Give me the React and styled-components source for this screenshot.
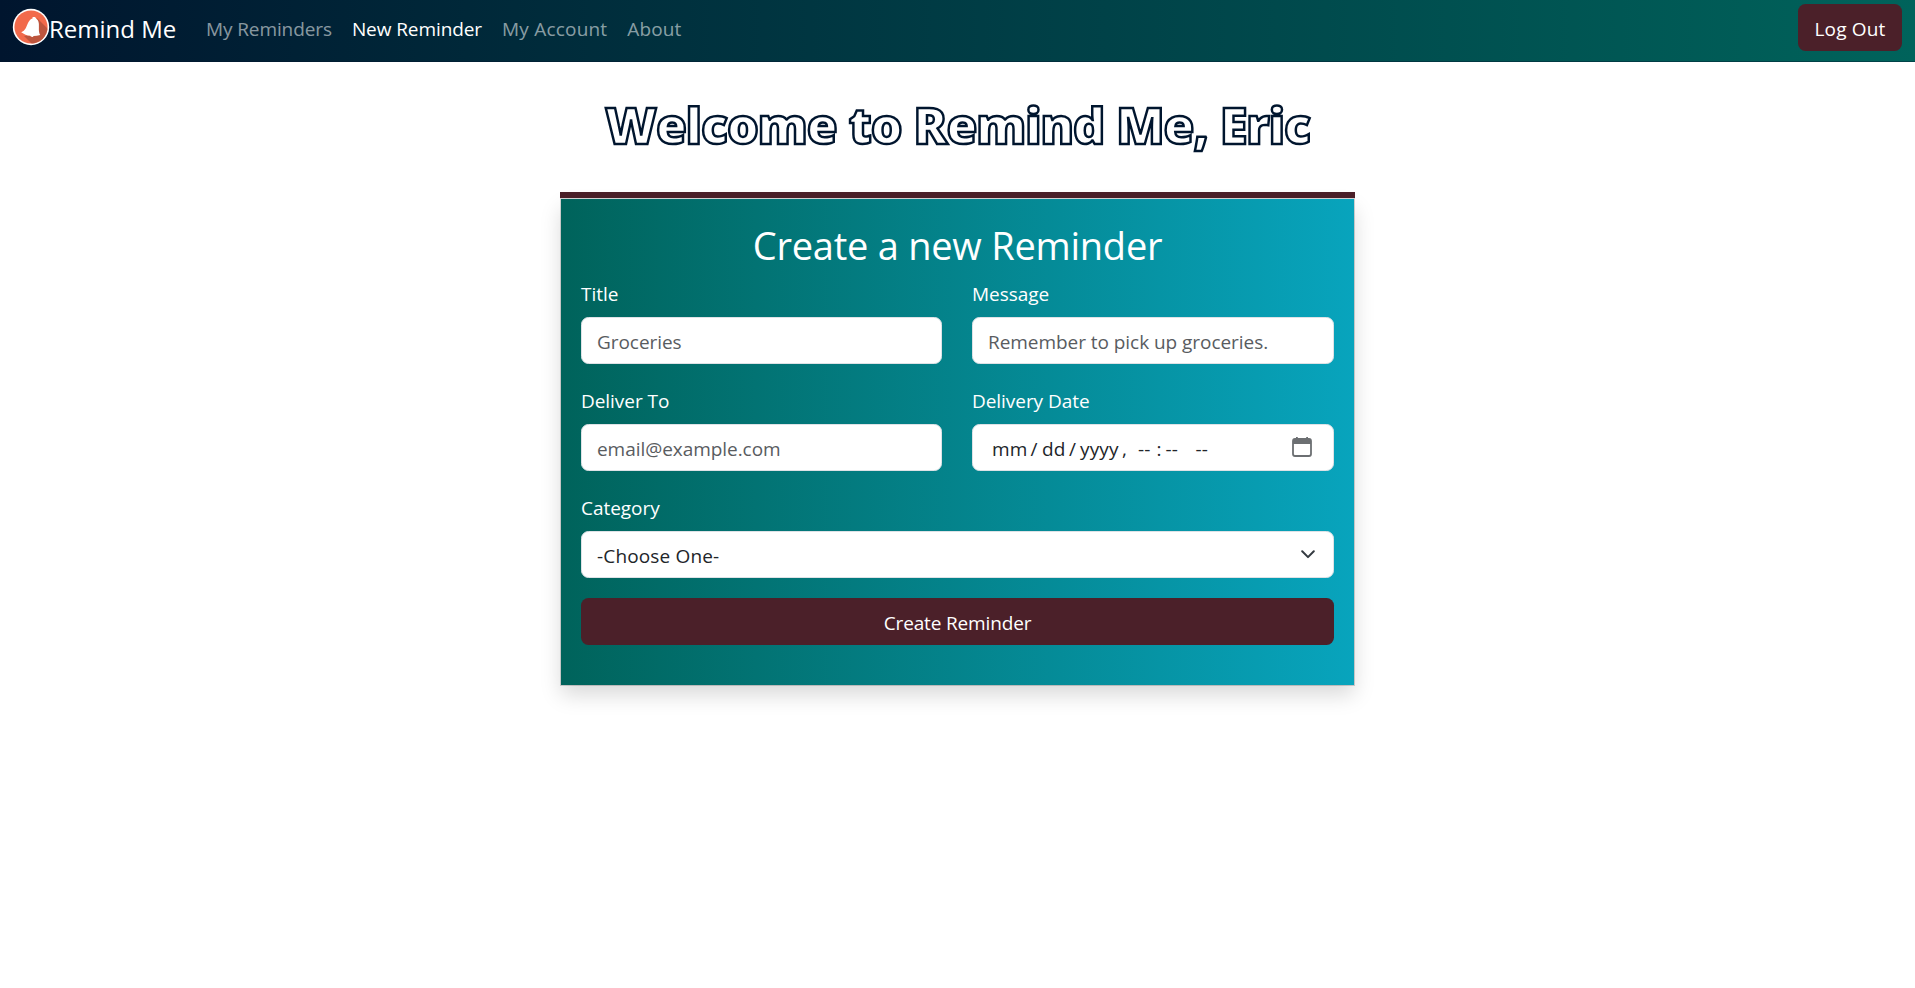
import React from 'react';
import styled, { createGlobalStyle } from 'styled-components';

const maroon = '#4b2029';

const GlobalStyle = createGlobalStyle`
  *, *::before, *::after { box-sizing: border-box; }
  body {
    margin: 0;
    background: #fff;
    color: #212529;
    font: 19px/30px "Open Sans", "Noto Sans", sans-serif;
  }
`;

const Page = styled.div`
  min-height: 100vh;
`;

const Navbar = styled.nav`
  display: flex;
  align-items: flex-start;
  height: 62px;
  padding: 4px 13px 0 12px;
  background: linear-gradient(to right, #00152e, #00635b);
  box-shadow: inset 0 -1px rgba(0, 21, 46, 0.4);
`;

const Brand = styled.a`
  display: flex;
  align-items: flex-start;
  width: 194px;
  padding-top: 4px;
  color: #fff;
  font-size: 24px;
  line-height: 38px;
  white-space: nowrap;
`;

const BellLogo = styled.svg`
  width: 38px;
  height: 38px;
  margin: 0 -1px 0 0;
  flex: none;
`;

const BrandName = styled.span`
  margin-top: 2px;
`;

const NavLinks = styled.div`
  display: flex;
  flex: 1;
  gap: 20px;
  padding-top: 10px;
`;

const NavLink = styled.a`
  color: ${({ $active }) => ($active ? '#fff' : 'rgba(255, 255, 255, 0.55)')};
  letter-spacing: ${({ $tracking }) => $tracking}px;
`;

const Button = styled.button`
  height: 47px;
  width: ${({ $block }) => ($block ? '100%' : '104px')};
  padding: 2px 0 0;
  border: 0;
  border-radius: 7.5px;
  background: ${maroon};
  color: #fff;
  font: inherit;
  letter-spacing: ${({ $block }) => ($block ? '-0.15px' : '0.2px')};
`;

const Main = styled.main`
  display: flex;
  flex-direction: column;
  align-items: center;
`;

const Welcome = styled.h1`
  margin: 33px 0 37px;
  color: #fff;
  font-size: 50px;
  font-weight: 800;
  line-height: 60px;
  letter-spacing: -1px;
  -webkit-text-stroke: 2.5px #00152e;
`;

const AccentBar = styled.div`
  width: 795px;
  height: 6px;
  background: ${maroon};
`;

const Card = styled.section`
  width: 793px;
  height: 486px;
  margin-top: 1px;
  padding: 20px;
  background: linear-gradient(to right, #00635b, #08a4bd);
  box-shadow: 0 0 0 1px rgba(0, 0, 0, 0.17), 0 10px 20px rgba(0, 0, 0, 0.15);
  color: #fff;
`;

const CardTitle = styled.h2`
  margin: 2px 0 10px;
  font-size: 38px;
  font-weight: 400;
  line-height: 48px;
  letter-spacing: -0.24px;
  text-align: center;
`;

const Fields = styled.div`
  display: grid;
  grid-template-columns: 361px 362px;
  column-gap: 30px;
  row-gap: 22px;
  margin-bottom: 20px;
`;

const Field = styled.div`
  grid-column: ${({ $wide }) => ($wide ? '1 / -1' : 'auto')};
`;

const Label = styled.div`
  height: 38px;
  letter-spacing: -0.05px;
`;

const Control = styled.div`
  display: flex;
  align-items: center;
  justify-content: space-between;
  height: 47px;
  padding: 2px 16px 0 15px;
  border: 1px solid #dee2e6;
  border-radius: 7.5px;
  background: #fff;
  color: ${({ $placeholder }) => ($placeholder ? '#595c5f' : '#212529')};
  letter-spacing: ${({ $placeholder }) => ($placeholder ? '-0.05px' : '0.15px')};
`;

const DateParts = styled.div`
  display: flex;
  padding-left: 4px;
`;

const DatePart = styled.span`
  width: ${({ $w }) => $w}px;
  white-space: pre;
`;

const CalendarIcon = styled.svg`
  width: 20px;
  height: 20px;
  margin: -4px 5px 0 0;
`;

const Chevron = styled.svg`
  width: 14px;
  height: 9px;
  margin: -3px 2px 0 0;
`;

const links = [
  { label: 'My Reminders', tracking: -0.1 },
  { label: 'New Reminder', tracking: -0.08, active: true },
  { label: 'My Account', tracking: 0.2 },
  { label: 'About', tracking: 0.1 },
];

const dateParts = [
  ['mm', 38.5], ['/', 11.5], ['dd', 27], ['/', 11], ['yyyy', 42], [',', 16],
  ['--', 18.5], [':', 9], ['--', 30], ['--', 16],
];

function Bell() {
  return (
    <BellLogo viewBox="0 0 38 38">
      <defs>
        <clipPath id="disc"><circle cx="19" cy="19" r="16.6" /></clipPath>
      </defs>
      <circle cx="19" cy="19" r="18.2" fill="#fff" />
      <g clipPath="url(#disc)">
        <rect width="38" height="38" fill="#f26a4b" />
        <path d="M25 10 L38 23 V38 H22 L12 28 L27 26 Z" fill="#bd553d" />
      </g>
      <path d="M20.5 9.2 C22.2 8.5 23.9 9 24.2 10.8 C27 12.6 27.1 15.8 26.9 19.5 C26.7 23 27.2 25.4 28.2 27.1 C26 27.6 23.8 28 21.6 28 C21.2 29.3 18.9 29.1 18.2 27.8 C15 27.4 12 26.2 9.2 24.2 C11.2 23.4 12.6 22.3 13.7 20.3 C15.5 17 16.5 11.6 20.5 10.5 Z" fill="#fff" />
    </BellLogo>
  );
}

export default function App() {
  return (
    <Page>
      <GlobalStyle />
      <Navbar>
        <Brand><Bell /><BrandName>Remind Me</BrandName></Brand>
        <NavLinks>
          {links.map((l) => (
            <NavLink key={l.label} $active={l.active} $tracking={l.tracking}>{l.label}</NavLink>
          ))}
        </NavLinks>
        <Button>Log Out</Button>
      </Navbar>
      <Main>
        <Welcome>Welcome to Remind Me, Eric</Welcome>
        <AccentBar />
        <Card>
          <CardTitle>Create a new Reminder</CardTitle>
          <Fields>
            <Field><Label>Title</Label><Control $placeholder>Groceries</Control></Field>
            <Field><Label>Message</Label><Control $placeholder>Remember to pick up groceries.</Control></Field>
            <Field><Label>Deliver To</Label><Control $placeholder>email@example.com</Control></Field>
            <Field>
              <Label>Delivery Date</Label>
              <Control>
                <DateParts>
                  {dateParts.map(([text, w], i) => <DatePart key={i} $w={w}>{text}</DatePart>)}
                </DateParts>
                <CalendarIcon viewBox="0 0 20 20">
                  <path d="M1 4 Q1 2 3 2 H17 Q19 2 19 4 V17 Q19 19 17 19 H3 Q1 19 1 17 Z" fill="none" stroke="#6c6f72" strokeWidth="1.8" />
                  <path d="M1 2.5 H19 V7 H1 Z M4 0 H5.8 V3 H4 Z M14.2 0 H16 V3 H14.2 Z" fill="#6c6f72" />
                </CalendarIcon>
              </Control>
            </Field>
            <Field $wide>
              <Label>Category</Label>
              <Control>
                -Choose One-
                <Chevron viewBox="0 0 14 9">
                  <path d="M1.2 1.3 L7 7.1 L12.8 1.3" fill="none" stroke="#343a40" strokeWidth="2" strokeLinecap="round" strokeLinejoin="round" />
                </Chevron>
              </Control>
            </Field>
          </Fields>
          <Button $block>Create Reminder</Button>
        </Card>
      </Main>
    </Page>
  );
}
